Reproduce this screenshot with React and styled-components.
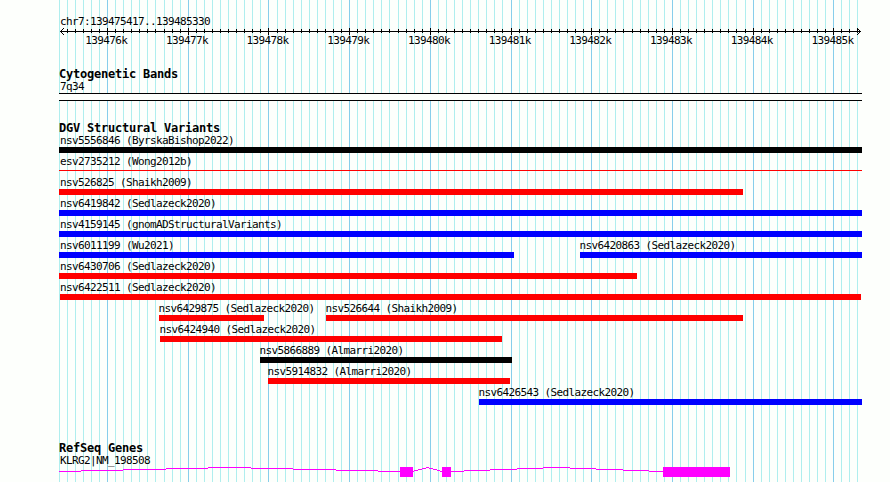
import React from 'react';
import styled, { createGlobalStyle } from 'styled-components';

const Global = createGlobalStyle`
  body { margin: 0; background: #fdfffc; }
`;

const LEFT = 59;
const RIGHT = 862;
const START = 139475417;
const SCALE = 0.08069;

const lines = [];
for (let p = 139475400; p <= 139485300; p += 100) {
  lines.push({ x: Math.round(60.01 + (p - START) * SCALE), major: p % 1000 === 0 });
}
const kilobases = Array.from({ length: 10 }, (_, i) => `${139476 + i}k`);

const Page = styled.main`
  position: relative;
  width: 890px;
  height: 482px;
  overflow: hidden;
  background: #fdfffc;
  color: #000;
  font: 11px/14px 'DejaVu Sans Mono', monospace;
  letter-spacing: -0.622px;
`;

const Backdrop = styled.svg`
  position: absolute;
  inset: 0;
`;

const Content = styled.div`
  position: relative;
  display: flex;
  flex-direction: column;
  width: ${RIGHT - LEFT}px;
  padding: 15px 0 0 ${LEFT}px;
`;

const Label = styled.div`
  height: 12px;
  width: max-content;
  white-space: pre;
  margin-left: ${(p) => p.$inset ?? 1}px;
`;

const Ruler = styled.svg`
  display: block;
  height: 8px;
  width: 803px;
`;

const Scale = styled.div`
  display: flex;
  height: 12px;
  line-height: 12px;
  padding-left: 26.2px;
`;

const Tick = styled.span`
  flex: 0 0 80.7px;
`;

const Track = styled.section`
  margin-top: ${(p) => p.$gap}px;
`;

const Title = styled.h2`
  margin: 0;
  height: 12px;
  font-size: 12px;
  line-height: 12px;
  font-weight: bold;
  letter-spacing: -0.224px;
  white-space: pre;
`;

const Band = styled.div`
  box-sizing: border-box;
  height: 8px;
  margin-top: 1px;
  border: solid #000;
  border-width: 1px 0;
  background: #fdfffc;
`;

const Lane = styled.div`
  display: flex;
  height: 21px;
`;

const Feature = styled.div`
  flex: none;
  width: ${(p) => p.$width}px;
  margin-left: ${(p) => p.$offset}px;
`;

const Bar = styled.div`
  height: ${(p) => (p.$thin ? 1 : 6)}px;
  margin-top: ${(p) => (p.$thin ? 3 : 1)}px;
  background: ${(p) => p.$color};
`;

const Gene = styled.svg`
  display: block;
  height: 12px;
  width: 803px;
`;

const RED = '#ff0000';
const BLUE = '#0000ff';
const BLACK = '#000000';

const lanes = [
  [['nsv5556846 (ByrskaBishop2022)', 59, 862, BLACK]],
  [['esv2735212 (Wong2012b)', 59, 862, RED, true]],
  [['nsv526825 (Shaikh2009)', 59, 743, RED]],
  [['nsv6419842 (Sedlazeck2020)', 59, 862, BLUE]],
  [['nsv4159145 (gnomADStructuralVariants)', 59, 862, BLUE]],
  [['nsv6011199 (Wu2021)', 59, 514, BLUE], ['nsv6420863 (Sedlazeck2020)', 580, 862, BLUE]],
  [['nsv6430706 (Sedlazeck2020)', 59, 637, RED]],
  [['nsv6422511 (Sedlazeck2020)', 60, 861, RED]],
  [['nsv6429875 (Sedlazeck2020)', 159, 264, RED], ['nsv526644 (Shaikh2009)', 326, 743, RED]],
  [['nsv6424940 (Sedlazeck2020)', 160, 502, RED]],
  [['nsv5866889 (Almarri2020)', 260, 512, BLACK]],
  [['nsv5914832 (Almarri2020)', 268, 510, RED]],
  [['nsv6426543 (Sedlazeck2020)', 479, 862, BLUE]],
];

const labelInset = (from) => {
  if (from === LEFT) return 1;
  return from === 60 ? 0 : -0.6;
};

// Intron steps: [start x, end x, y]
const introns = [
  [59, 81, 471], [81, 123, 470], [123, 166, 469], [166, 208, 468], [208, 251, 467],
  [251, 293, 468], [293, 336, 469], [336, 378, 470], [378, 400, 471],
  [413, 414, 471], [414, 418, 470], [418, 422, 469], [422, 426, 468], [426, 429, 467],
  [429, 433, 468], [433, 437, 469], [437, 440, 470], [440, 442, 471],
  [451, 464, 471], [464, 490, 470], [490, 517, 469], [517, 543, 468], [543, 570, 467],
  [570, 596, 468], [596, 623, 469], [623, 649, 470], [649, 663, 471],
];
const exons = [[400, 413], [442, 451], [663, 730]];

export default function App() {
  return (
    <Page>
      <Global />
      <Backdrop width="890" height="482" shapeRendering="crispEdges">
        {lines.map((l) => (
          <rect key={l.x} x={l.x} width="1" height="482" fill={l.major ? '#87ceeb' : '#afeeee'} />
        ))}
      </Backdrop>
      <Content>
        <Label>chr7:139475417..139485330</Label>
        <Ruler viewBox="59 27 803 8" shapeRendering="crispEdges">
          <rect x="60" y="31" width="801" height="1" />
          {lines.slice(1).map((l) => (
            <rect key={l.x} x={l.x} y={l.major ? 28 : 29} width="1" height={l.major ? 7 : 4} />
          ))}
          {[1, 2, 3].map((d) => (
            <g key={d}>
              <rect x={60 + d} y={31 - d} width="1" height="1" />
              <rect x={60 + d} y={31 + d} width="1" height="1" />
              <rect x={860 - d} y={31 - d} width="1" height="1" />
              <rect x={860 - d} y={31 + d} width="1" height="1" />
            </g>
          ))}
        </Ruler>
        <Scale>
          {kilobases.map((k) => <Tick key={k}>{k}</Tick>)}
        </Scale>
        <Track $gap={21}>
          <Title>Cytogenetic Bands</Title>
          <Label>7q34</Label>
          <Band />
        </Track>
        <Track $gap={21}>
          <Title>DGV Structural Variants</Title>
          {lanes.map((lane) => (
            <Lane key={lane[0][0]}>
              {lane.map(([name, from, to, color, thin], i) => (
                <Feature key={name} $offset={from - (i ? lane[i - 1][2] : LEFT)} $width={to - from}>
                  <Label $inset={labelInset(from)}>{name}</Label>
                  <Bar $color={color} $thin={thin} />
                </Feature>
              ))}
            </Lane>
          ))}
        </Track>
        <Track $gap={35}>
          <Title>RefSeq Genes</Title>
          <Label>KLRG2|NM_198508</Label>
          <Gene viewBox="59 466 803 12" shapeRendering="crispEdges" fill="#ff00ff">
            {introns.map(([a, b, y]) => <rect key={a} x={a} y={y} width={b - a} height="1" />)}
            {exons.map(([a, b]) => <rect key={a} x={a} y="467" width={b - a} height="10" />)}
          </Gene>
        </Track>
      </Content>
    </Page>
  );
}
